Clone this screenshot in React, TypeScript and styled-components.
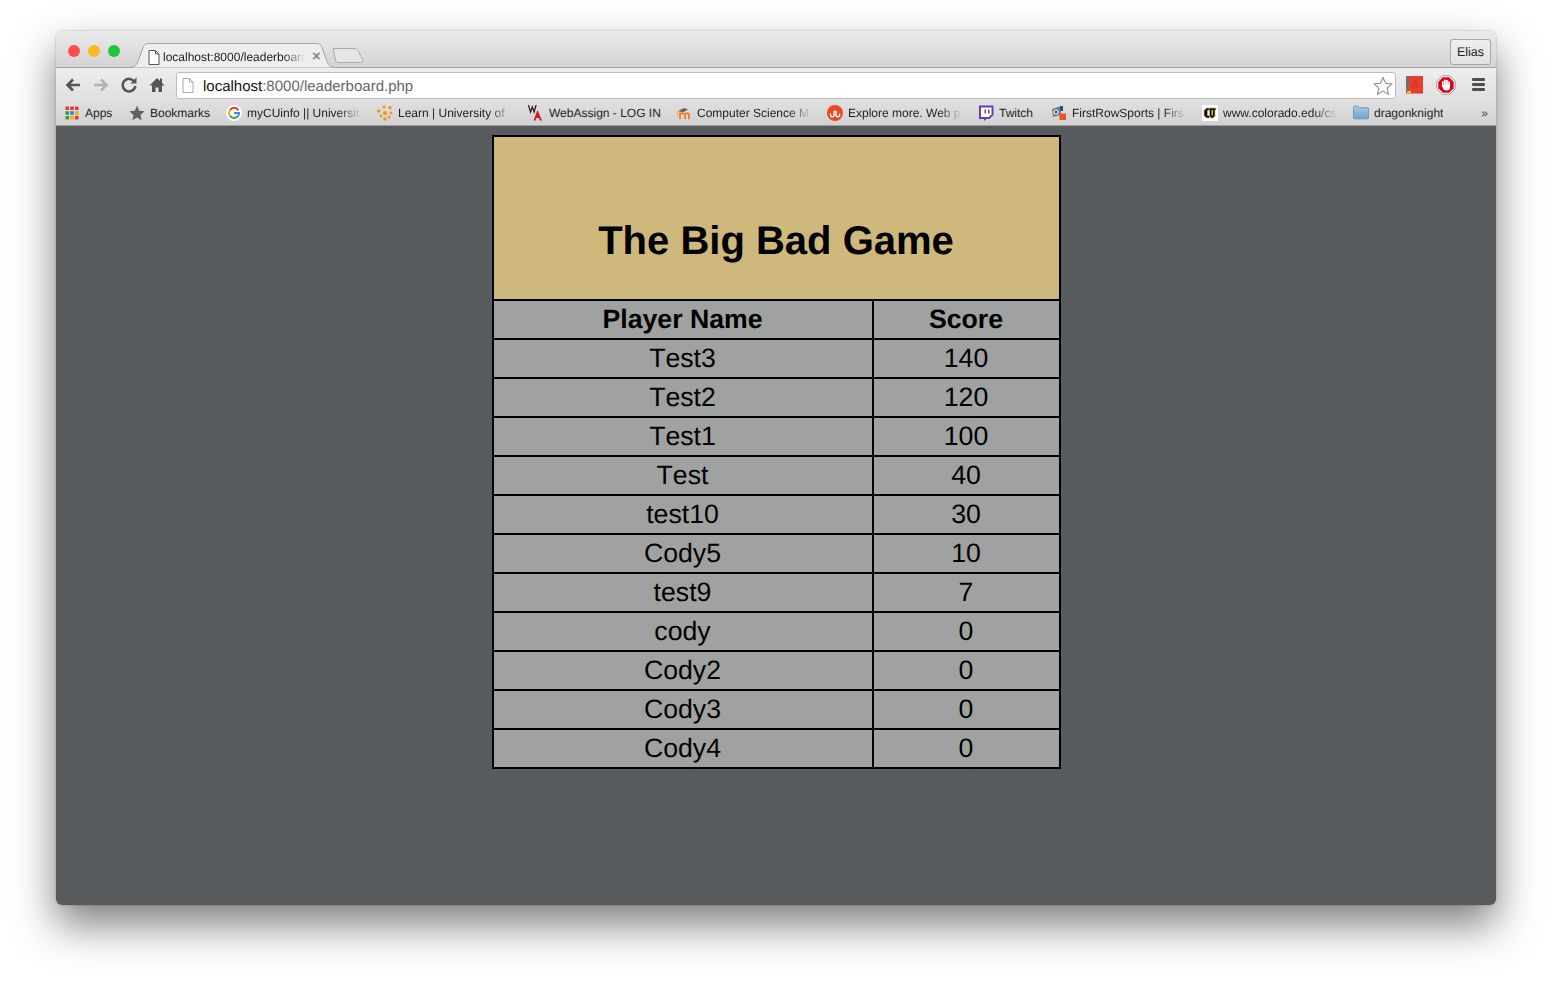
import React from "react";
import styled, { createGlobalStyle } from "styled-components";

const players = [
  { name: "Test3", score: 140 },
  { name: "Test2", score: 120 },
  { name: "Test1", score: 100 },
  { name: "Test", score: 40 },
  { name: "test10", score: 30 },
  { name: "Cody5", score: 10 },
  { name: "test9", score: 7 },
  { name: "cody", score: 0 },
  { name: "Cody2", score: 0 },
  { name: "Cody3", score: 0 },
  { name: "Cody4", score: 0 },
];

const AppsIcon = () => {
  const colors = ["#e8392b", "#e8392b", "#e8392b", "#2f9e4f", "#2a7de1", "#f5a800", "#2f9e4f", "#f5a800", "#e8392b"];
  return (
    <svg width="14" height="14" viewBox="0 0 14 14">
      {colors.map((c, i) => (
        <rect key={i} x={0.5 + (i % 3) * 4.75} y={0.5 + Math.floor(i / 3) * 4.75} width="3.5" height="3.5" fill={c} />
      ))}
    </svg>
  );
};

const StarIcon = () => (
  <svg width="16" height="16" viewBox="0 0 16 16">
    <path d="M8 .8l2.200 4.900 5.300.6-4 3.600 1.100 5.300L8 12.500l-4.600 2.700 1.100-5.300-4-3.600 5.300-.6z" fill="#606060" />
  </svg>
);

const GoogleIcon = () => (
  <svg width="16" height="16" viewBox="0 0 16 16">
    <circle cx="8" cy="8" r="8" fill="#fff" />
    <path d="M12.400 5.200A5 5 0 0 0 3.900 5.200" fill="none" stroke="#e8392b" strokeWidth="2" />
    <path d="M3.900 5.200a5 5 0 0 0 0 5.600" fill="none" stroke="#f5b800" strokeWidth="2" />
    <path d="M3.900 10.800a5 5 0 0 0 8 .4" fill="none" stroke="#34a853" strokeWidth="2" />
    <path d="M8 8h5a5 5 0 0 1-1.100 3.200" fill="none" stroke="#4285f4" strokeWidth="2" />
  </svg>
);

const LearnIcon = () => (
  <svg width="16" height="16" viewBox="0 0 16 16" fill="#f7950f">
    <circle cx="8" cy="8" r="2" />
    <circle cx="1.800" cy="6" r="1.700" />
    <circle cx="7" cy="2" r="1.500" />
    <circle cx="13" cy="2.800" r="1.700" />
    <circle cx="14" cy="8" r="1.400" />
    <circle cx="4" cy="11" r="1.400" />
    <circle cx="8" cy="14" r="1.700" />
    <circle cx="12" cy="12" r="1.400" />
  </svg>
);

const WebAssignIcon = () => (
  <svg width="16" height="16" viewBox="0 0 16 16">
    <path d="M.5 0l2 7 1.800-5 1.800 5 2-7" fill="none" stroke="#222" strokeWidth="1.300" />
    <path d="M5.500 15.500L9.500 5l4.500 10.500h-2.200l-.8-2.500H8.300l-.8 2.500z" fill="#d01622" />
  </svg>
);

const MoodleIcon = () => (
  <svg width="16" height="16" viewBox="0 0 16 16">
    <path d="M2 6l6-3 4 1.500L7 7.500z" fill="#6e655b" />
    <path d="M1 12c.6-2 .4-4 .8-6" fill="none" stroke="#f7a75a" strokeWidth="1" />
    <path d="M4 14V8.500h3a2 2 0 0 1 2 2V14M9 10a2 2 0 0 1 4 .5V14" fill="none" stroke="#f58220" strokeWidth="2" />
  </svg>
);

const StumbleIcon = () => (
  <svg width="16" height="16" viewBox="0 0 16 16">
    <circle cx="8" cy="8" r="8" fill="#eb4823" />
    <path d="M3.500 8.500V10a1.800 1.800 0 0 0 3.600 0V6.800a1 1 0 0 1 1.900 0v3.200a1.800 1.800 0 0 0 3.600 0V8.500" fill="none" stroke="#fff" strokeWidth="1.400" />
  </svg>
);

const TwitchIcon = () => (
  <svg width="16" height="16" viewBox="0 0 16 16">
    <path d="M1 .5h14.500v9.500l-4 4H8.500L6 16v-2H1z" fill="#6441a5" />
    <path d="M3 2.500h10.500v6.700L10.800 12H3z" fill="#fff" />
    <path d="M6.500 4.500h1.500v4H6.500zM10 4.500h1.500v4H10z" fill="#6441a5" />
  </svg>
);

const SportsIcon = () => (
  <svg width="16" height="16" viewBox="0 0 16 16">
    <path d="M1 4l9-3v9l-8 2z" fill="#6d7fa3" />
    <circle cx="5" cy="7" r="2.600" fill="#dfe3ea" />
    <circle cx="5" cy="7" r="1.300" fill="#39425a" />
    <rect x="9" y="1" width="3" height="5" fill="#3f4c70" />
    <rect x="8.500" y="8.500" width="6.500" height="6.500" fill="#f0521e" />
  </svg>
);

const ColoradoIcon = () => (
  <svg width="16" height="16" viewBox="0 0 16 16">
    <rect width="16" height="16" fill="#fff" />
    <path d="M7.500 3H4.500L2 5.500v5L4.500 13h3v-2.500H5.500v-5h2z" fill="#111" stroke="#c9b26f" strokeWidth=".7" />
    <path d="M7 3h7v2h-1v6l-2 2H9l-1.500-2V5H7z" fill="#111" stroke="#c9b26f" strokeWidth=".7" />
    <path d="M9.500 5v5.500h1.500V5z" fill="#cfb87c" />
  </svg>
);

const FolderIcon = () => (
  <svg width="17" height="15" viewBox="0 0 17 15">
    <defs>
      <linearGradient id="folderFill" x1="0" y1="0" x2="0" y2="1">
        <stop offset="0" stopColor="#a5cbe6" />
        <stop offset="1" stopColor="#6fa4cb" />
      </linearGradient>
    </defs>
    <path d="M.5 3V1.800A1 1 0 0 1 1.500.8h4.200l1.300 1.700h8.500a1 1 0 0 1 1 1v9.700a1 1 0 0 1-1 1h-14a1 1 0 0 1-1-1z" fill="url(#folderFill)" stroke="#6a97b8" />
  </svg>
);

const PageIcon = ({ color }: { color: string }) => (
  <PageSvg width="12" height="15" viewBox="0 0 12 15">
    <path d="M1 .5h6.500l3.500 3.500v10.500H1z" fill="#fff" stroke={color} />
    <path d="M7.500.5V4H11" fill="none" stroke={color} />
  </PageSvg>
);

const bookmarks = [
  { icon: <AppsIcon />, label: "Apps", width: 65 },
  { icon: <StarIcon />, label: "Bookmarks", width: 97 },
  { icon: <GoogleIcon />, label: "myCUinfo || Universit", width: 151, fade: true },
  { icon: <LearnIcon />, label: "Learn | University of", width: 151, fade: true },
  { icon: <WebAssignIcon />, label: "WebAssign - LOG IN", width: 148 },
  { icon: <MoodleIcon />, label: "Computer Science M", width: 151, fade: true },
  { icon: <StumbleIcon />, label: "Explore more. Web p", width: 151, fade: true },
  { icon: <TwitchIcon />, label: "Twitch", width: 73 },
  { icon: <SportsIcon />, label: "FirstRowSports | Firs", width: 151, fade: true },
  { icon: <ColoradoIcon />, label: "www.colorado.edu/cs", width: 151, fade: true },
  { icon: <FolderIcon />, label: "dragonknight", width: 110 },
];

const App: React.FC = () => {
  return (
    <>
      <GlobalStyle />
      <Stage>
        <Browser>
          <TabStrip>
            <Lights>
              <Light color="#fc4f4c" />
              <Light color="#fdb825" />
              <Light color="#1ec83a" />
            </Lights>
            <Tab>
              <TabShape viewBox="0 0 209 25" preserveAspectRatio="none">
                <path
                  d="M0 24.500c5 0 8-1 10-6l5-14c1-3 3-4 6-4h167c3 0 5 1 6 4l5 14c2 5 5 6 10 6"
                  fill="#eeeeee"
                  stroke="#a3a3a3"
                />
              </TabShape>
              <PageIcon color="#555" />
              <TabTitle>localhost:8000/leaderboard.php</TabTitle>
              <TabClose>×</TabClose>
            </Tab>
            <NewTab width="33" height="17" viewBox="0 0 33 17">
              <path
                d="M1 1.500h21c2 0 3 .5 4 2l4.500 9c.8 2-.5 3-2 3H7c-2 0-3-1-3.500-2.500z"
                fill="#e6e6e6"
                stroke="#a9a9a9"
              />
            </NewTab>
            <UserButton>Elias</UserButton>
          </TabStrip>
          <Toolbar>
            <NavButtons>
              <NavIcon viewBox="0 0 18 18">
                <path d="M16 9H4M9 3.500L3.500 9 9 14.500" fill="none" stroke="#555" strokeWidth="2.600" />
              </NavIcon>
              <NavIcon viewBox="0 0 18 18">
                <path d="M2 9h12M9 3.500L14.500 9 9 14.500" fill="none" stroke="#b4b4b4" strokeWidth="2.600" />
              </NavIcon>
              <NavIcon viewBox="0 0 18 18">
                <path d="M14.500 6A6.300 6.300 0 1 0 15.300 10" fill="none" stroke="#555" strokeWidth="2.500" />
                <path d="M10.500 7.500h6v-6z" fill="#555" />
              </NavIcon>
              <NavIcon viewBox="0 0 18 18">
                <path d="M9 2L1.500 9.500h2.500V16h3.500v-4.500h3V16H14V9.500h2.500L14 7V2.500h-2V5z" fill="#555" />
              </NavIcon>
            </NavButtons>
            <AddressBar>
              <PageIcon color="#aaa" />
              <Url>
                localhost<UrlRest>:8000/leaderboard.php</UrlRest>
              </Url>
              <svg width="20" height="20" viewBox="0 0 20 20">
                <path
                  d="M10 1.500l2.600 5.700 6.200.7-4.600 4.200 1.300 6.100L10 15.100l-5.500 3.100 1.300-6.100-4.600-4.200 6.200-.7z"
                  fill="#fff"
                  stroke="#8e8e8e"
                  strokeWidth="1.100"
                />
              </svg>
            </AddressBar>
            <Extensions>
              <svg width="17" height="18" viewBox="0 0 17 18">
                <rect width="17" height="17" fill="#ea3f2d" />
                <rect width="3" height="16" fill="#6f6f6f" />
                <rect y="16" width="17" height="1.500" fill="#e3352a" />
                <rect x="1" y="15" width="4" height="2.500" fill="#f0c020" />
                <path d="M6 12l3-8 3 8M7 9.500h4" fill="none" stroke="#d8352a" strokeWidth="1.500" />
              </svg>
              <svg width="20" height="20" viewBox="0 0 20 20">
                <path d="M6.200 .8h7.600l5.400 5.400v7.600l-5.400 5.400H6.200L.8 13.800V6.200z" fill="#fff" stroke="#888" strokeWidth=".8" />
                <path d="M6.800 2.300h6.400l4.500 4.500v6.400l-4.500 4.500H6.800l-4.500-4.500V6.800z" fill="#e2001a" />
                <g fill="#fff">
                  <rect x="5.900" y="6" width="1.800" height="6" rx=".9" />
                  <rect x="8" y="4.500" width="1.800" height="7" rx=".9" />
                  <rect x="10.100" y="4.800" width="1.800" height="7" rx=".9" />
                  <rect x="12.200" y="6.200" width="1.800" height="6" rx=".9" />
                  <path d="M5.900 10h8.100v2.500c0 2-1.500 3-3.500 3-1.800 0-2.900-.8-3.600-2.200z" />
                </g>
              </svg>
              <MenuIcon>
                <MenuBar />
                <MenuBar />
                <MenuBar />
              </MenuIcon>
            </Extensions>
          </Toolbar>
          <BookmarkBar>
            {bookmarks.map((b) => (
              <Bookmark key={b.label} $width={b.width}>
                <BookmarkIcon>{b.icon}</BookmarkIcon>
                <BookmarkLabel $fade={b.fade}>{b.label}</BookmarkLabel>
              </Bookmark>
            ))}
            <MoreBookmarks>»</MoreBookmarks>
          </BookmarkBar>
          <Content>
            <Leaderboard>
              <colgroup>
                <col style={{ width: 380 }} />
                <col />
              </colgroup>
              <thead>
                <tr>
                  <TitleCell colSpan={2}>The Big Bad Game</TitleCell>
                </tr>
                <tr>
                  <HeadCell>Player Name</HeadCell>
                  <HeadCell>Score</HeadCell>
                </tr>
              </thead>
              <tbody>
                {players.map((p) => (
                  <tr key={p.name}>
                    <Cell>{p.name}</Cell>
                    <Cell>{p.score}</Cell>
                  </tr>
                ))}
              </tbody>
            </Leaderboard>
          </Content>
        </Browser>
      </Stage>
    </>
  );
};

const GlobalStyle = createGlobalStyle`
  html, body {
    margin: 0;
    padding: 0;
    background: #fff;
    overflow: hidden;
  }
  body {
    font-family: "Liberation Sans", Arial, sans-serif;
    text-rendering: geometricPrecision;
  }
`;

const Stage = styled.div`
  height: 985px;
  padding: 31px 56px 80px;
  box-sizing: border-box;
  overflow: hidden;
`;

const Browser = styled.div`
  height: 874px;
  display: flex;
  flex-direction: column;
  border-radius: 6px;
  overflow: hidden;
  box-shadow: 0 0 2px rgba(0, 0, 0, 0.3), 0 20px 42px rgba(0, 0, 0, 0.5);
`;

const TabStrip = styled.div`
  height: 37px;
  flex: none;
  box-sizing: border-box;
  display: flex;
  align-items: flex-end;
  padding: 0 5px 0 12px;
  background: linear-gradient(#ebebeb, #d3d3d3);
  border-bottom: 1px solid #a3a3a3;
`;

const Lights = styled.div`
  display: flex;
  gap: 8px;
  align-self: flex-start;
  margin-top: 14px;
`;

const Light = styled.span<{ color: string }>`
  width: 12px;
  height: 12px;
  border-radius: 50%;
  background: ${(p) => p.color};
`;

const Tab = styled.div`
  position: relative;
  width: 209px;
  height: 25px;
  flex: none;
  margin: 0 0 -1px 8px;
  box-sizing: border-box;
  padding: 3px 0 0 20px;
  display: flex;
  align-items: center;
  gap: 3px;
`;

const TabShape = styled.svg`
  position: absolute;
  left: 0;
  top: 0;
  width: 100%;
  height: 100%;
`;

const PageSvg = styled.svg`
  position: relative;
  flex: none;
`;

const TabTitle = styled.span`
  position: relative;
  flex: none;
  width: 142px;
  font-size: 12px;
  color: #222;
  white-space: nowrap;
  overflow: hidden;
  mask-image: linear-gradient(to right, #000 85%, transparent);
`;

const TabClose = styled.span`
  position: relative;
  margin-left: 4px;
  font-size: 15px;
  line-height: 14px;
  font-weight: bold;
  color: #8a8a8a;
`;

const NewTab = styled.svg`
  position: relative;
  margin: 0 0 3px -5px;
  flex: none;
`;

const UserButton = styled.div`
  margin: 0 0 2px auto;
  align-self: flex-end;
  width: 41px;
  height: 26px;
  box-sizing: border-box;
  display: flex;
  align-items: center;
  justify-content: center;
  font-size: 12.5px;
  color: #222;
  border: 1px solid #a8a8a8;
  border-radius: 3px;
  background: linear-gradient(#efefef, #e2e2e2);
`;

const Toolbar = styled.div`
  height: 32px;
  flex: none;
  box-sizing: border-box;
  display: flex;
  align-items: center;
  padding: 3px 8px 0;
  background: linear-gradient(#eeeeee, #e0e0e0);
`;

const NavButtons = styled.div`
  display: flex;
  align-items: center;
  gap: 10px;
  width: 112px;
  flex: none;
  margin-bottom: 2px;
`;

const NavIcon = styled.svg`
  width: 18px;
  height: 18px;
  flex: none;
`;

const AddressBar = styled.div`
  flex: none;
  width: 1220px;
  height: 27px;
  box-sizing: border-box;
  display: flex;
  align-items: center;
  padding: 0 2px 0 5px;
  background: #fff;
  border: 1px solid #bdbdbd;
  border-radius: 3px;
`;

const Url = styled.div`
  flex: 1;
  margin-left: 9px;
  padding-top: 1px;
  font-size: 15px;
  color: #111;
`;

const UrlRest = styled.span`
  color: #666;
`;

const Extensions = styled.div`
  display: flex;
  align-items: center;
  margin: 0 0 2px 10px;
  gap: 13px;
`;

const MenuIcon = styled.div`
  width: 13px;
  margin-left: 3px;
  display: flex;
  flex-direction: column;
  gap: 2px;
`;

const MenuBar = styled.span`
  height: 3px;
  border-radius: 1px;
  background: #4f4f4f;
`;

const BookmarkBar = styled.div`
  height: 26px;
  flex: none;
  box-sizing: border-box;
  display: flex;
  align-items: center;
  padding: 0 8px;
  background: linear-gradient(#e0e0e0, #d2d2d2);
  border-bottom: 1px solid #9d9d9d;
`;

const Bookmark = styled.div<{ $width: number }>`
  width: ${(p) => p.$width}px;
  flex: none;
  display: flex;
  align-items: center;
  gap: 5px;
  min-width: 0;
`;

const BookmarkIcon = styled.span`
  width: 16px;
  height: 16px;
  flex: none;
  display: flex;
  align-items: center;
  justify-content: center;
`;

const BookmarkLabel = styled.span<{ $fade?: boolean }>`
  font-size: 12px;
  line-height: 16px;
  color: #222;
  white-space: nowrap;
  overflow: hidden;
  width: ${(p) => (p.$fade ? "114px" : "auto")};
  mask-image: ${(p) =>
    p.$fade ? "linear-gradient(to right, #000 80%, transparent)" : "none"};
`;

const MoreBookmarks = styled.span`
  margin-left: auto;
  font-size: 12px;
  color: #444;
`;

const Content = styled.div`
  flex: 1;
  background: #585b5e;
  padding-top: 9px;
`;

const Leaderboard = styled.table`
  width: 569px;
  margin: 0 auto;
  border-collapse: collapse;
  border: 2px solid #000;
  table-layout: fixed;
  color: #000;
`;

const TitleCell = styled.th`
  height: 164px;
  box-sizing: border-box;
  padding: 46px 0 0;
  background: #cfb87c;
  border: 2px solid #000;
  font-size: 40px;
  font-weight: bold;
  text-align: center;
`;

const HeadCell = styled.th`
  height: 39px;
  box-sizing: border-box;
  padding: 0;
  background: #a0a2a1;
  border: 2px solid #000;
  font-size: 26.67px;
  font-weight: bold;
  text-align: center;
`;

const Cell = styled.td`
  height: 39px;
  box-sizing: border-box;
  padding: 0;
  background: #a0a2a1;
  border: 2px solid #000;
  font-size: 26.67px;
  font-kerning: none;
  text-align: center;
`;

export default App;
